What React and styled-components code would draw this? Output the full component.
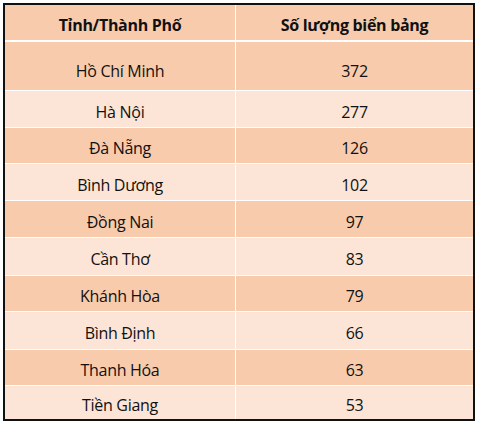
import React from 'react';
import styled, { createGlobalStyle } from 'styled-components';

const GlobalStyle = createGlobalStyle`
  html, body {
    margin: 0;
    padding: 0;
    background: #ffffff;
  }
  body {
    font-family: "Open Sans", "Noto Sans", "Liberation Sans", sans-serif;
  }
`;

const Page = styled.div`
  padding: 3px 0 0 3px;
`;

const Table = styled.div`
  width: 468px;
  border: 2px solid #111;
  background: #ffffff;
  display: flex;
  flex-direction: column;
  gap: 1px;
`;

const Row = styled.div`
  display: grid;
  grid-template-columns: 230px 237px;
  column-gap: 1px;
  height: ${(p) => p.$height}px;
  margin-bottom: ${(p) => (p.$header ? 1 : 0)}px;
`;

const Cell = styled.div`
  display: flex;
  align-items: center;
  justify-content: center;
  padding-top: ${(p) => p.$offset}px;
  box-sizing: border-box;
  background: ${(p) => (p.$dark ? '#f8cbad' : '#fce4d6')};
  color: #111;
  font-size: 16px;
  letter-spacing: -0.3px;
  font-weight: ${(p) => (p.$bold ? 700 : 400)};
`;

const rows = [
  ['Hồ Chí Minh', '372'],
  ['Hà Nội', '277'],
  ['Đà Nẵng', '126'],
  ['Bình Dương', '102'],
  ['Đồng Nai', '97'],
  ['Cần Thơ', '83'],
  ['Khánh Hòa', '79'],
  ['Bình Định', '66'],
  ['Thanh Hóa', '63'],
  ['Tiền Giang', '53'],
];

const heights = [48, 36, 35, 36, 36, 37, 35, 37, 35, 33];

export default function App() {
  return (
    <>
      <GlobalStyle />
      <Page>
        <Table>
          <Row $height={35} $header>
            <Cell $dark $bold $offset={5}>Tỉnh/Thành Phố</Cell>
            <Cell $dark $bold $offset={5}>Số lượng biển bảng</Cell>
          </Row>
          {rows.map(([city, count], i) => (
            <Row key={city} $height={heights[i]}>
              <Cell $dark={i % 2 === 0} $offset={i === 0 ? 10 : 5}>{city}</Cell>
              <Cell $dark={i % 2 === 0} $offset={i === 0 ? 10 : 5}>{count}</Cell>
            </Row>
          ))}
        </Table>
      </Page>
    </>
  );
}
